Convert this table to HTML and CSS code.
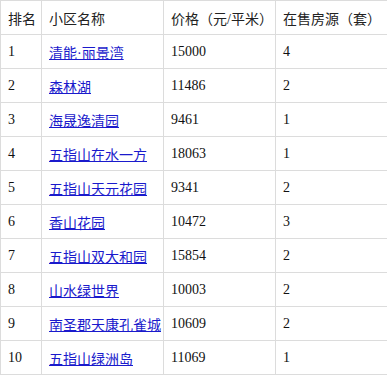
FILE: index.html
```html
<!DOCTYPE html>
<html lang="zh">
<head>
<meta charset="utf-8">
<title>小区排名</title>
<link rel="stylesheet" href="styles.css">
</head>
<body>
<table class="rank">
  <colgroup>
    <col class="c-rank">
    <col class="c-name">
    <col class="c-price">
    <col class="c-count">
  </colgroup>
  <thead>
    <tr><th>排名</th><th>小区名称</th><th>价格（元/平米）</th><th>在售房源（套）</th></tr>
  </thead>
  <tbody>
    <tr><td>1</td><td><a href="#">清能·丽景湾</a></td><td>15000</td><td>4</td></tr>
    <tr><td>2</td><td><a href="#">森林湖</a></td><td>11486</td><td>2</td></tr>
    <tr><td>3</td><td><a href="#">海晟逸清园</a></td><td>9461</td><td>1</td></tr>
    <tr><td>4</td><td><a href="#">五指山在水一方</a></td><td>18063</td><td>1</td></tr>
    <tr><td>5</td><td><a href="#">五指山天元花园</a></td><td>9341</td><td>2</td></tr>
    <tr><td>6</td><td><a href="#">香山花园</a></td><td>10472</td><td>3</td></tr>
    <tr><td>7</td><td><a href="#">五指山双大和园</a></td><td>15854</td><td>2</td></tr>
    <tr><td>8</td><td><a href="#">山水绿世界</a></td><td>10003</td><td>2</td></tr>
    <tr><td>9</td><td><a href="#">南圣郡天康孔雀城</a></td><td>10609</td><td>2</td></tr>
    <tr><td>10</td><td><a href="#">五指山绿洲岛</a></td><td>11069</td><td>1</td></tr>
  </tbody>
</table>
</body>
</html>
```
FILE: styles.css
```css
html, body {
  margin: 0;
  padding: 0;
  background: #fff;
}
body {
  font-family: "Liberation Serif", "Noto Sans CJK SC", serif;
  font-size: 14px;
  color: #111;
}
.rank {
  border-collapse: collapse;
  table-layout: fixed;
  width: 387px;
}
.c-rank { width: 41px; }
.c-name { width: 122px; }
.c-price { width: 112px; }
.c-count { width: 112px; }
.rank th,
.rank td {
  border: 1px solid #dcdcdc;
  height: 33px;
  padding: 0 0 0 7px;
  text-align: left;
  vertical-align: middle;
  white-space: nowrap;
  overflow: hidden;
}
.rank th {
  font-weight: normal;
  color: #222;
}
.rank a {
  color: #1a1acc;
  text-decoration: underline;
}
```
